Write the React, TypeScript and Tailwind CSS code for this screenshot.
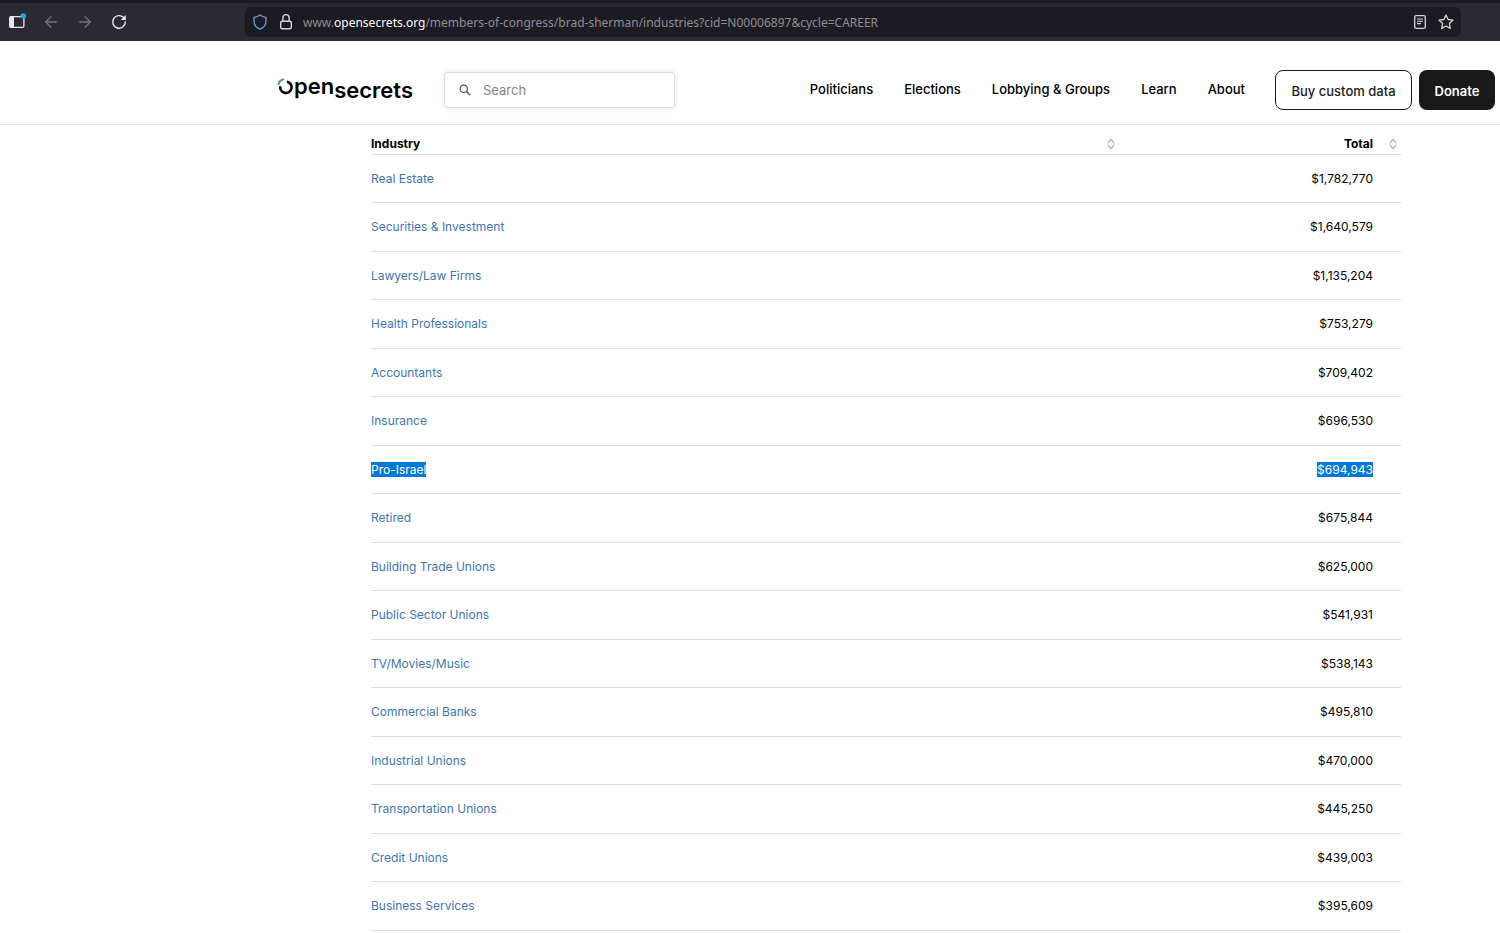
import { ArrowLeft, ArrowRight } from "lucide-react";

type Industry = {
  name: string;
  total: string;
  selected?: boolean;
};

const industries: Industry[] = [
  { name: "Real Estate", total: "$1,782,770" },
  { name: "Securities & Investment", total: "$1,640,579" },
  { name: "Lawyers/Law Firms", total: "$1,135,204" },
  { name: "Health Professionals", total: "$753,279" },
  { name: "Accountants", total: "$709,402" },
  { name: "Insurance", total: "$696,530" },
  { name: "Pro-Israel", total: "$694,943", selected: true },
  { name: "Retired", total: "$675,844" },
  { name: "Building Trade Unions", total: "$625,000" },
  { name: "Public Sector Unions", total: "$541,931" },
  { name: "TV/Movies/Music", total: "$538,143" },
  { name: "Commercial Banks", total: "$495,810" },
  { name: "Industrial Unions", total: "$470,000" },
  { name: "Transportation Unions", total: "$445,250" },
  { name: "Credit Unions", total: "$439,003" },
  { name: "Business Services", total: "$395,609" }
];

const navItems = ["Politicians", "Elections", "Lobbying & Groups", "Learn", "About"];

export default function App() {
  return (
    <div className="min-h-screen bg-white font-['Inter',sans-serif] text-black">
      <BrowserBar />
      <SiteHeader />
      <main className="ml-[371px] mr-[99px]">
        <IndustryTable />
      </main>
    </div>
  );
}

function BrowserBar() {
  return (
    <div className="flex h-[41px] items-center border-t-3 border-[#1c1b22] bg-[#2b2a33] pl-2 pr-[39px]">
      <div className="flex w-[237px] shrink-0 items-center gap-4 text-[#e8e8ec]">
        <button type="button" aria-label="Sidebar">
          <svg className="h-[18px] w-[18px]" viewBox="0 0 18 18" fill="none">
            <rect x="1.700" y="3.700" width="14.200" height="10.600" rx="1.200" stroke="currentColor" strokeWidth="1.300" />
            <rect x="2" y="4" width="4" height="10" fill="currentColor" />
            <circle cx="15.300" cy="3" r="2.800" fill="#1aa7dc" />
          </svg>
        </button>
        <button type="button" aria-label="Back" className="text-[#76757d]">
          <ArrowLeft className="h-[18px] w-[18px]" strokeWidth={1.7} />
        </button>
        <button type="button" aria-label="Forward" className="text-[#76757d]">
          <ArrowRight className="h-[18px] w-[18px]" strokeWidth={1.7} />
        </button>
        <button type="button" aria-label="Reload">
          <svg className="h-[18px] w-[18px]" viewBox="0 0 18 18" fill="none">
            <path d="M13.600 4.600A6.300 6.300 0 1 0 15.300 9" stroke="currentColor" strokeWidth="1.400" strokeLinecap="round" />
            <path d="M15.800 2.100v5h-5z" fill="currentColor" />
          </svg>
        </button>
      </div>

      <div className="flex h-[30px] min-w-0 flex-1 items-center rounded-md bg-[#1c1b22] px-[6px] text-[#d6d6da]">
        <svg className="mr-2 h-[18px] w-[18px] shrink-0" viewBox="0 0 18 18" fill="none">
          <defs>
            <linearGradient id="shield" x1="3" y1="15" x2="15" y2="3" gradientUnits="userSpaceOnUse">
              <stop stopColor="#39b5f2" />
              <stop offset="0.55" stopColor="#5f9fdc" />
              <stop offset="1" stopColor="#a08bc9" />
            </linearGradient>
          </defs>
          <path
            d="M9 2c1.700 1.300 3.600 2 6 2.300v3.700c0 3.900-2.400 6.700-6 8.200-3.600-1.500-6-4.300-6-8.200V4.300C5.400 4 7.300 3.300 9 2z"
            stroke="url(#shield)"
            strokeWidth="1.300"
            strokeLinejoin="round"
          />
        </svg>
        <svg className="mr-2 h-[18px] w-[18px] shrink-0" viewBox="0 0 18 18" fill="none" stroke="currentColor">
          <rect x="3.700" y="8.200" width="10.600" height="7.600" rx="1.500" strokeWidth="1.400" />
          <path d="M5.900 8V4.700a3.100 3.100 0 0 1 6.200 0V8" strokeWidth="1.400" />
        </svg>
        <p className="min-w-0 flex-1 truncate pt-[2px] font-['Noto_Sans',sans-serif] text-[12px] leading-5 text-[#8f8e96]">
          www.<span className="text-[#fbfbfe]">opensecrets.org</span>
          /members-of-congress/brad-sherman/industries?cid=N00006897&amp;cycle=CAREER
        </p>
        <button type="button" aria-label="Reader view" className="mr-2">
          <svg className="h-[18px] w-[18px]" viewBox="0 0 18 18" fill="none" stroke="currentColor">
            <rect x="3.700" y="2.700" width="10.600" height="12.600" rx="1.300" strokeWidth="1.300" />
            <path d="M6 6h6M6 8.300h6M6 10.600h4" strokeWidth="1.100" />
          </svg>
        </button>
        <button type="button" aria-label="Bookmark this page">
          <svg className="h-[18px] w-[18px]" viewBox="0 0 18 18" fill="none">
            <path
              d="M9 2l2.100 4.500 4.900.6-3.600 3.400.9 4.900L9 13l-4.300 2.400.9-4.900L2 7.100l4.900-.6z"
              stroke="currentColor"
              strokeWidth="1.300"
              strokeLinejoin="round"
            />
          </svg>
        </button>
      </div>
    </div>
  );
}

function SiteHeader() {
  return (
    <header className="flex h-[84px] items-center justify-between border-b border-[#e6e6e6] pl-[277px] pr-[5px] pt-[15px]">
      <div className="flex items-center gap-[30px]">
        <Logo />
        <label className="flex h-9 w-[231px] items-center gap-3 rounded-[3px] border border-[#dedede] px-[14px] shadow-[0_0_6px_rgba(0,0,0,0.1)]">
          <svg className="h-3 w-3 shrink-0" viewBox="0 0 12 12" fill="none" stroke="#555">
            <circle cx="4.800" cy="4.800" r="3.700" strokeWidth="1.200" />
            <path d="M7.600 7.600l3.600 3.600" strokeWidth="1.400" />
          </svg>
          <input
            type="search"
            placeholder="Search"
            aria-label="Search"
            className="w-full min-w-0 pt-[2px] text-[13px] outline-none placeholder:text-[#858585]"
          />
        </label>
      </div>

      <div className="flex items-center">
        <nav className="mr-[30px] flex gap-[31px] pb-[2px] text-[13px] leading-5 font-medium">
          {navItems.map((item) => (
            <a key={item} href="#">
              {item}
            </a>
          ))}
        </nav>
        <button
          type="button"
          className="mr-[7px] h-10 w-[137px] rounded-lg border border-[#1a1a1a] pt-1 text-[13px] font-medium text-[#222]"
        >
          Buy custom data
        </button>
        <button type="button" className="h-10 w-[76px] rounded-lg bg-[#191919] pt-1 text-[13px] font-semibold text-white">
          Donate
        </button>
      </div>
    </header>
  );
}

function Logo() {
  return (
    <a href="#" aria-label="OpenSecrets" className="flex w-[137px] items-start text-[22px] leading-6 font-semibold">
      <svg className="h-[17px] w-[17px] shrink-0" viewBox="0 0 17 17" fill="none">
        <path d="M1.300 7.200A6.800 6.800 0 0 1 7 1.200" stroke="#5a9e58" strokeWidth="2" />
        <path d="M10 3.700A5.700 5.700 0 1 1 3.300 8.300" stroke="#0a0a0a" strokeWidth="2.600" />
      </svg>
      <span className="-mt-1">pen</span>
      <span>secrets</span>
    </a>
  );
}

function SortIcon() {
  return (
    <svg className="h-3 w-2" viewBox="0 0 8 12" fill="none" stroke="#888">
      <path d="M1.300 4.800L4 1.200l2.700 3.600M1.300 7.200L4 10.800l2.700-3.600M1.300 4.800v.6M6.700 4.800v.6M1.300 7.200v-.6M6.700 7.200v-.6" />
    </svg>
  );
}

function IndustryTable() {
  return (
    <table className="w-full table-fixed border-separate border-spacing-0 text-[12px] leading-4">
      <thead>
        <tr className="h-[30px]">
          <th scope="col" className="border-b border-[#dedede] p-0 pt-2 text-left font-bold">
            <button type="button" className="flex w-full items-center justify-between">
              Industry
              <SortIcon />
            </button>
          </th>
          <th scope="col" className="w-[286px] border-b border-[#dedede] p-0 pt-2 font-bold">
            <button type="button" className="flex w-full items-center justify-end gap-4 pr-1">
              Total
              <SortIcon />
            </button>
          </th>
        </tr>
      </thead>
      <tbody>
        {industries.map((industry) => (
          <tr key={industry.name} className="h-12 even:h-[49px]">
            <td className="border-b border-[#dedede] p-0">
              <a href="#" className={industry.selected ? "bg-[#0078d7] text-white" : "text-[#3d76b5]"}>
                {industry.name}
              </a>
            </td>
            <td className="border-b border-[#dedede] p-0 pr-7 text-right">
              <span className={industry.selected ? "bg-[#0078d7] text-white" : ""}>{industry.total}</span>
            </td>
          </tr>
        ))}
      </tbody>
    </table>
  );
}
